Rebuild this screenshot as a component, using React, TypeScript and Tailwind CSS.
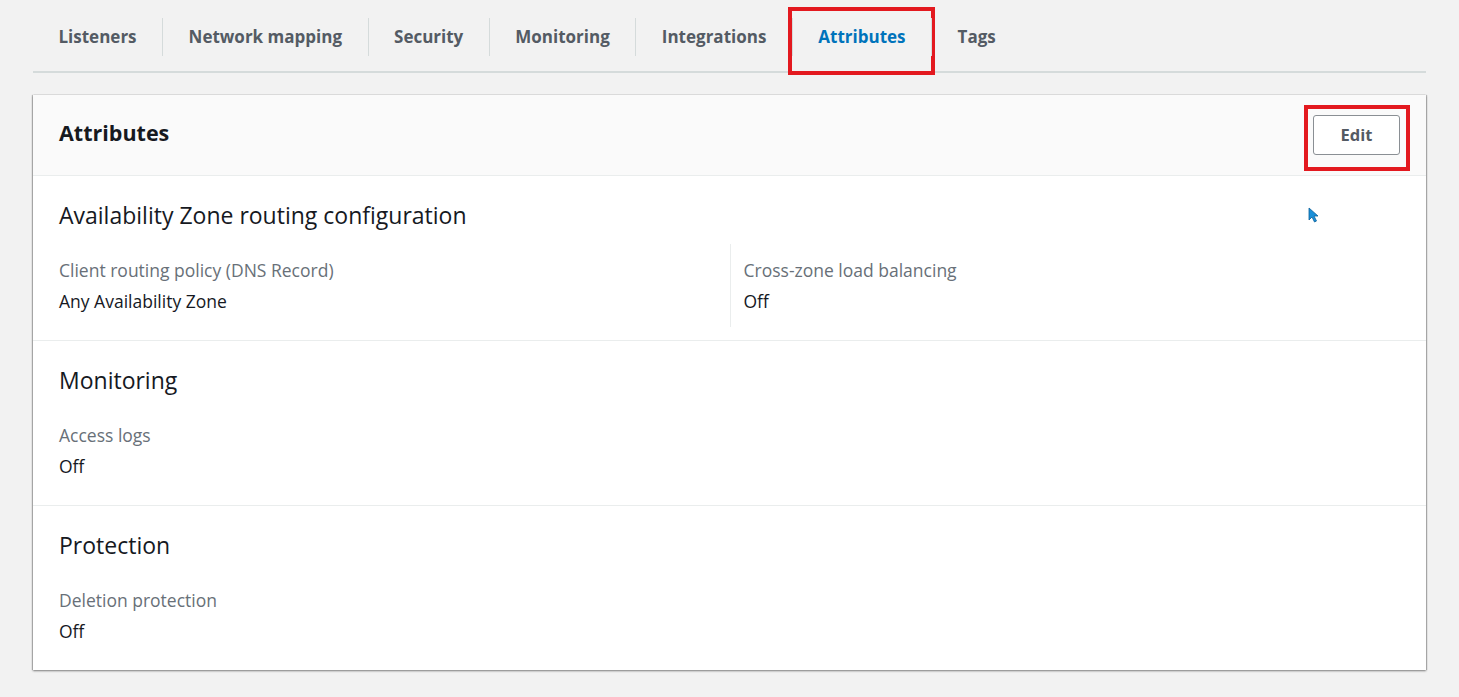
import React from 'react';

const tabs = ['Listeners', 'Network mapping', 'Security', 'Monitoring', 'Integrations', 'Attributes', 'Tags'];

function Field({ label, value }: { label: string; value: string }) {
  return (
    <div>
      <p className="text-[17.5px] leading-[22px] text-[#687078]">{label}</p>
      <p className="mt-[9px] text-[17.5px] leading-[22px] text-[#16191f]">{value}</p>
    </div>
  );
}

function Section({ title, last, children }: { title: string; last?: boolean; children: React.ReactNode }) {
  return (
    <div className={`px-[26px] pt-[25px] ${last ? '' : 'border-b border-[#eaeded]'}`}>
      <h3 className="text-[23px] leading-[28px] text-[#16191f]">{title}</h3>
      {children}
    </div>
  );
}

export default function App() {
  return (
    <div className="min-h-[697px] bg-[#f2f2f2] px-[33px]" style={{ fontFamily: '"Open Sans", "Noto Sans", sans-serif' }}>
      <div className="flex h-[73px] items-center border-b-2 border-[#d5dbdb] pt-[2px]">
        {tabs.map((t, i) => (
          <div key={t} className="relative flex h-[38px] items-center">
            {i > 0 && <span className="h-[38px] w-px bg-[#d5dbdb]" />}
            <span
              className={`px-[25.5px] text-[17px] font-bold leading-[24px] ${
                t === 'Attributes' ? 'text-[#0073bb]' : 'text-[#545b64]'
              }`}
            >
              {t}
            </span>
            {t === 'Attributes' && (
              <span className="absolute left-[-4px] top-[-11px] h-[68px] w-[147px] border-4 border-[#e3191f]" />
            )}
          </div>
        ))}
      </div>

      <div className="mt-[22px] bg-white shadow-[0_1px_2px_0_rgba(0,0,0,0.45),1px_0_1px_0_rgba(0,0,0,0.2),-1px_0_1px_0_rgba(0,0,0,0.2)]">
        <div className="flex h-[81px] items-center justify-between border-b border-[#eaeded] bg-[#fafafa] px-[26px]">
          <h2 className="mb-[4px] text-[21.5px] font-bold leading-[28px] text-[#16191f]">Attributes</h2>
          <div className="relative">
            <button className="h-[40px] w-[87px] rounded-[3px] border border-[#8a8f94] bg-white text-[16.5px] font-bold text-[#545b64]">
              Edit
            </button>
            <span className="absolute left-[-9px] top-[-10px] h-[66px] w-[106px] border-4 border-[#e3191f]" />
          </div>
        </div>

        <div className="relative">
          <Section title="Availability Zone routing configuration">
            <div className="mt-[15px] grid grid-cols-2 pb-[13px]">
              <div className="py-[15px]">
                <Field label="Client routing policy (DNS Record)" value="Any Availability Zone" />
              </div>
              <div className="border-l border-[#eaeded] py-[15px] pl-[13px]">
                <Field label="Cross-zone load balancing" value="Off" />
              </div>
            </div>
          </Section>
          <svg className="absolute left-[1275px] top-[31px]" width="12" height="16" viewBox="0 0 12 16">
            <path d="M1 1 L1 13 L4 10 L6.5 15 L8.5 14 L6 9 L10 9 Z" fill="#1a8fd8" stroke="#0b5f99" strokeWidth="0.8" />
          </svg>
        </div>

        <Section title="Monitoring">
          <div className="mt-[15px] pb-[13px]">
            <div className="py-[15px]">
              <Field label="Access logs" value="Off" />
            </div>
          </div>
        </Section>

        <Section title="Protection" last>
          <div className="mt-[15px] pb-[13px]">
            <div className="py-[15px]">
              <Field label="Deletion protection" value="Off" />
            </div>
          </div>
        </Section>
      </div>
    </div>
  );
}
